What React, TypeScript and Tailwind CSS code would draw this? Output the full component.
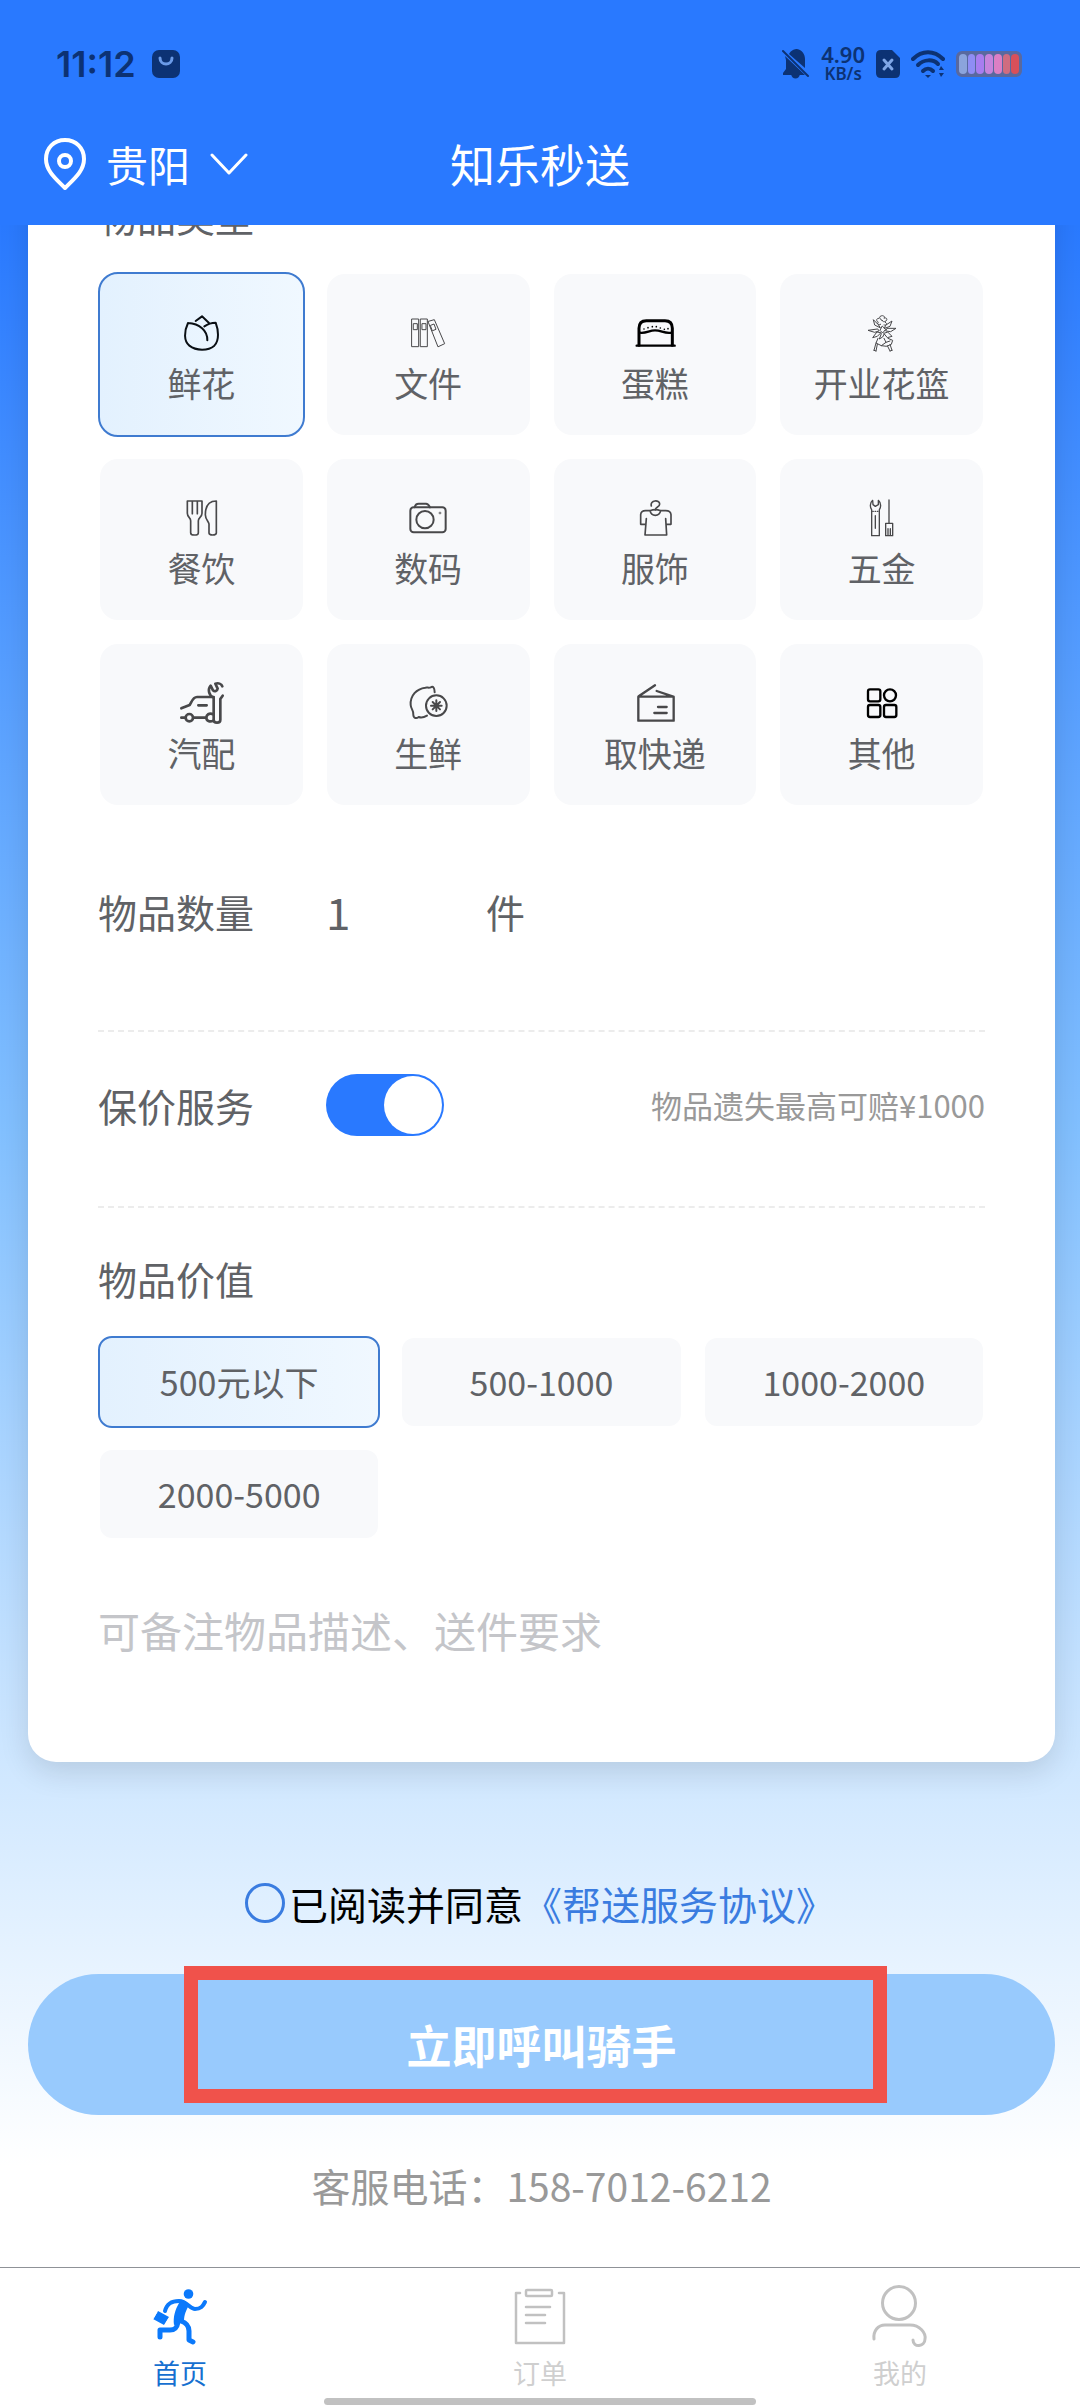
import React, { useState } from 'react';

type IconProps = { children: React.ReactNode; stroke?: string; width?: number };

const LineIcon: React.FC<IconProps> = ({ children, stroke = '#48484a', width = 5 }) => (
  <svg
    viewBox="0 0 120 120"
    className="w-10 h-10 overflow-visible"
    fill="none"
    stroke={stroke}
    strokeWidth={width}
    strokeLinecap="round"
    strokeLinejoin="round"
    aria-hidden="true"
  >
    {children}
  </svg>
);

const goods = [
  {
    name: '鲜花',
    icon: (
      <LineIcon stroke="#0a0f14" width={6}>
        <path d="M21 30C9 55 8 85 25 98C45 114 82 114 100 98C116 82 112 50 104 29C92 29 80 33 70 40M21 30C55 32 80 52 79 82M44 24L63 10L84 30" />
      </LineIcon>
    ),
  },
  {
    name: '文件',
    icon: (
      <LineIcon width={3}>
        <path d="M12 18H32V101H12ZM38 18H58V101H38ZM61 25L79 20L110 92L91 101ZM17 32H28V50H17ZM43 32H54V50H43ZM68 37L78 33L84 49L74 53Z" />
      </LineIcon>
    ),
  },
  {
    name: '蛋糕',
    icon: (
      <LineIcon stroke="#000" width={7}>
        <path d="M12 97V46Q12 23 34 23H90Q112 23 112 46V97" strokeWidth={9} />
        <path d="M5 98H119" />
        <path d="M14 59C34 62 42 52 60 52C80 52 88 63 110 59" />
        <path d="M27 48h0M39 44h0M52 41h0M64 41h0M76 45h0M88 49h0M99 47h0" strokeWidth={5} />
      </LineIcon>
    ),
  },
  {
    name: '开业花篮',
    icon: (
      <LineIcon width={3}>
        <path d="M60 22C52 18 50 11 57 9C63 6 70 10 66 16C72 12 78 18 72 24C66 28 62 26 60 22ZM50 16C42 16 42 24 49 28C44 30 48 38 56 34M70 28C78 32 74 38 66 36" />
        <path d="M48 34L34 20L38 36L54 44ZM72 36L90 24L84 40L68 46ZM46 48L18 52L38 58L50 54ZM76 46L102 46L86 56L72 54Z" />
        <path d="M60 40L54 52L62 60L70 50ZM44 58L32 74L46 70L56 60ZM66 62L76 74L90 70L78 58ZM58 62L52 78L62 72L66 64" />
        <path d="M48 76L42 90L58 98L72 88L66 76M42 90L36 112M46 94L42 114M36 112L42 114M78 76L92 82L88 94L74 100L58 98M84 94L90 112M76 98L84 114M84 114L90 112M72 88L84 84" />
      </LineIcon>
    ),
  },
  {
    name: '餐饮',
    icon: (
      <LineIcon>
        <path d="M19 9V46C19 58 29 58 29 68V104Q29 111 40 111Q52 111 52 104V68C52 58 63 58 63 46V9ZM34 9V47M49 9V47" />
        <path d="M106 9V105Q106 111 95 111Q84 111 84 105V78C84 72 73 64 73 50C73 22 84 9 106 9Z" />
      </LineIcon>
    ),
  },
  {
    name: '数码',
    icon: (
      <LineIcon width={6}>
        <rect x="7" y="28" width="106" height="75" rx="10" />
        <circle cx="51" cy="65" r="26" />
        <circle cx="96" cy="45" r="1" />
        <path d="M20 28C22 18 26 17 32 17H54C60 17 62 20 66 28" />
      </LineIcon>
    ),
  },
  {
    name: '服饰',
    icon: (
      <LineIcon>
        <path d="M49 24C44 6 74 4 74 18C74 28 61 26 61 36" />
        <path d="M34 62L30 111H95L92 62M32 79H17V50Q18 38 32 38H45Q48 52 61 52Q74 52 77 38H92Q107 38 108 50V79H94M45 38Q61 32 77 38" />
      </LineIcon>
    ),
  },
  {
    name: '五金',
    icon: (
      <LineIcon width={4}>
        <path d="M32 7C24 14 23 28 29 35V113H52V35C58 28 57 14 49 7V20L40 25L33 20ZM40 53V91M81 6V76M71 76H92V113H71ZM78 92V112M85 92V112" />
        <path d="M32 40H50" strokeDasharray="2 5" />
      </LineIcon>
    ),
  },
  {
    name: '汽配',
    icon: (
      <LineIcon width={8}>
        <path d="M1 76L26 66C32 56 36 42 48 42H98M52 67H77M1 104H12M38 104H75" />
        <circle cx="25" cy="104" r="11" />
        <path d="M97 94C84 88 76 96 76 104C76 113 86 118 97 113" />
        <path d="M98 44V110Q98 119 108 119Q118 119 118 110V48L125 38M98 44C82 36 80 18 89 8L96 22C101 27 109 24 110 17L103 2C114 -1 122 4 124 10" />
      </LineIcon>
    ),
  },
  {
    name: '生鲜',
    icon: (
      <LineIcon width={6}>
        <path d="M80 28C80 16 76 8 68 13C64 15 58 13 52 14C26 17 6 38 8 66C9 80 18 82 16 96C17 107 26 107 32 102C40 105 50 102 57 98" />
        <circle cx="85" cy="68" r="31" />
        <path d="M85 52V84M69 68H101M74 57L96 79M96 57L74 79" />
      </LineIcon>
    ),
  },
  {
    name: '取快递',
    icon: (
      <LineIcon width={7}>
        <path d="M10 41H116V113H10ZM11 40L60 7M65 24L115 41M69 72H95M58 90H95" />
      </LineIcon>
    ),
  },
  {
    name: '其他',
    icon: (
      <LineIcon stroke="#000" width={7}>
        <rect x="18" y="19" width="37" height="36" rx="6" />
        <circle cx="84" cy="37" r="18" />
        <rect x="18" y="66" width="37" height="36" rx="6" />
        <rect x="66" y="66" width="37" height="36" rx="6" />
      </LineIcon>
    ),
  },
];

const prices = ['500元以下', '500-1000', '1000-2000', '2000-5000'];

const batteryCells = [
  'bg-[#8ba4dc]',
  'bg-[#8f8df5]',
  'bg-[#a87df0]',
  'bg-[#c684dc]',
  'bg-[#dc7fc4]',
  'bg-[#d06c80]',
  'bg-[#d8505a]',
];

const optionOn = 'border-[#3f7bd0] bg-linear-to-r from-[#e3f1fe] to-[#f0f8ff]';
const optionOff = 'border-white bg-[#f8f9fb]';

const StatusBar = () => (
  <div className="flex h-32 items-center justify-between pl-14 pr-[58px] text-[#0c3274]">
    <div className="flex items-center gap-4">
      <span className="font-[Inter] text-[36px] font-semibold leading-10">11:12</span>
      <svg viewBox="0 0 28 28" className="w-7 h-7" aria-hidden="true">
        <rect width="28" height="28" rx="7" fill="currentColor" />
        <path d="M8 8C8 16 20 16 20 8" fill="none" stroke="#6b9be8" strokeWidth="3" strokeLinecap="round" />
      </svg>
    </div>
    <div className="flex items-center gap-[11px]">
      <svg viewBox="0 0 28 30" className="w-7 h-[30px]" fill="currentColor" aria-hidden="true">
        <path d="M7 5C9 1 13 0 15 0C20 1 23 5 23 10V19ZM3 7L23 26H1V24L4 20V11Z" />
        <path d="M9 25H18C17 31 10 31 9 25Z" />
        <path d="M1 2L26 27" stroke="currentColor" strokeWidth="2" strokeLinecap="round" />
      </svg>
      <div className="flex flex-col items-center font-['Noto_Sans'] font-semibold">
        <span className="text-[22px] leading-5">4.90</span>
        <span className="text-[17px] leading-5">KB/s</span>
      </div>
      <svg viewBox="0 0 24 28" className="w-6 h-7" aria-hidden="true">
        <path d="M5 0H16L24 8V23Q24 28 19 28H5Q0 28 0 23V5Q0 0 5 0Z" fill="currentColor" />
        <path d="M8 10L16 19M16 10L8 19" stroke="#7fa6e6" strokeWidth="3" strokeLinecap="round" />
      </svg>
      <svg viewBox="0 0 34 28" className="w-[34px] h-7" fill="none" stroke="currentColor" strokeLinecap="round" aria-hidden="true">
        <path d="M2 9C11 0 23 0 32 9" strokeWidth="4" />
        <path d="M7 15C13 9 22 9 27 14" strokeWidth="4" />
        <path d="M12 21C15 18 19 18 22 21" strokeWidth="4" />
        <path d="M14 25H20L17 28Z" fill="currentColor" stroke="none" />
        <path d="M28 20L30 16L33 20ZM28 23L30 27L33 23Z" fill="currentColor" stroke="none" />
      </svg>
      <div className="flex h-[26px] w-[66px] gap-px rounded-md border-3 border-[#59699f] bg-[#59699f]">
        {batteryCells.map((c) => (
          <span key={c} className={`flex-1 rounded-sm ${c}`} />
        ))}
      </div>
    </div>
  </div>
);

const Header = () => (
  <header className="sticky top-0 z-10 bg-[#2979ff] pb-[25px] text-white">
    <StatusBar />
    <div className="grid h-18 grid-cols-[1fr_auto_1fr] items-center">
      <button type="button" className="flex items-center gap-5 pl-11 text-[42px] leading-14">
        <svg viewBox="0 0 42 52" className="w-[42px] h-[52px]" fill="none" stroke="currentColor" strokeWidth="4" strokeLinejoin="round" aria-hidden="true">
          <path d="M21 2C10 2 2 10 2 21C2 33 12 41 21 50C30 41 40 33 40 21C40 10 32 2 21 2Z" />
          <circle cx="21" cy="23" r="6" />
        </svg>
        <span>贵阳</span>
        <svg viewBox="0 0 38 22" className="w-[38px] h-[22px]" fill="none" stroke="currentColor" strokeWidth="3" strokeLinecap="round" strokeLinejoin="round" aria-hidden="true">
          <path d="M2 2L19 20L36 2" />
        </svg>
      </button>
      <h1 className="text-[45px] leading-14">知乐秒送</h1>
    </div>
  </header>
);

const HomeIcon = () => (
  <svg viewBox="0 0 56 56" className="w-14 h-14 overflow-visible" fill="none" stroke="currentColor" strokeLinecap="round" strokeLinejoin="round" aria-hidden="true">
    <circle cx="36.5" cy="6" r="4.8" fill="currentColor" stroke="none" />
    <path d="M13 23C15 15 20 13 27 13C35 13 38 21 43 21C49 21 51 18 53 14" strokeWidth="4" />
    <path d="M27 12C34 12 37 16 36 19C33 25 32 28 32 34L22 37C21 29 23 22 27 15Z" fill="currentColor" stroke="none" />
    <path d="M29 33C35 35 37 38 37 43V52L41 54" strokeWidth="5" />
    <path d="M26 34C25 40 23 42 18 42H8V49" strokeWidth="5" />
    <path d="M6 23L17 29L12 37L1 31Z" fill="currentColor" stroke="none" />
    <path d="M5 24L1 31M17 30L13 37" stroke="#fff" strokeWidth="1" />
  </svg>
);

const OrderIcon = () => (
  <svg viewBox="0 0 56 56" className="w-14 h-14 overflow-visible" fill="none" stroke="#c1c1c1" strokeWidth="2.5" strokeLinecap="round" strokeLinejoin="round" aria-hidden="true">
    <path d="M8 5H4V55H52V5H47M14 19H38M14 27H33M14 35H33" />
    <rect x="14" y="2" width="26" height="6" rx="1" />
  </svg>
);

const MineIcon = () => (
  <svg viewBox="0 0 56 56" className="w-14 h-14 overflow-visible" fill="none" stroke="#c1c1c1" strokeWidth="3" strokeLinecap="round" aria-hidden="true">
    <circle cx="27" cy="15" r="16.5" />
    <path d="M2 51C1 43 6 37 13 37H38C48 37 54 45 53 51C53 59 41 60 41 52" />
  </svg>
);

const tabs = [
  { name: '首页', icon: <HomeIcon />, color: 'text-[#0b79fb]', label: 'text-[#1670d0]' },
  { name: '订单', icon: <OrderIcon />, color: '', label: 'text-[#cfcfcf]' },
  { name: '我的', icon: <MineIcon />, color: '', label: 'text-[#cfcfcf]' },
];

const App: React.FC = () => {
  const [type, setType] = useState('鲜花');
  const [price, setPrice] = useState('500元以下');
  const [count, setCount] = useState('1');
  const [insured, setInsured] = useState(true);
  const [agreed, setAgreed] = useState(false);

  return (
    <div className="flex min-h-screen flex-col bg-linear-to-b from-[#2979ff] from-9% via-[#82c0ff] via-47% to-white to-90% font-['Noto_Sans_CJK_SC',sans-serif] text-[#606266]">
      <Header />

      <main className="flex-1 pb-[52px] pl-7 pr-[25px]">
        <section className="-mt-[50px] rounded-[28px] bg-white px-[70px] pb-20 pt-3 shadow-[0_10px_30px_rgba(0,0,0,0.12)]">
          {/* 物品类型 */}
          <h2 className="mb-[29px] text-[39px] leading-14">物品类型</h2>
          <div className="grid grid-cols-4 gap-5">
            {goods.map((item) => (
              <button
                key={item.name}
                type="button"
                aria-pressed={type === item.name}
                onClick={() => setType(item.name)}
                className={`flex h-[165px] flex-col items-center gap-[5px] rounded-[20px] border-2 pt-[39px] ${
                  type === item.name ? optionOn : optionOff
                }`}
              >
                {item.icon}
                <span className="text-[34px] leading-[50px]">{item.name}</span>
              </button>
            ))}
          </div>

          {/* 数量 */}
          <div className="mt-[61px] flex items-center border-b-2 border-dashed border-[#ececec] pb-[76px] text-[39px]">
            <label htmlFor="count" className="w-[228px]">物品数量</label>
            <input
              id="count"
              value={count}
              onChange={(e) => setCount(e.target.value)}
              className="h-[86px] w-40 text-[44px] outline-none"
            />
            <span>件</span>
          </div>

          {/* 保价 */}
          <div className="flex items-center border-b-2 border-dashed border-[#ececec] pb-[70px] pt-[42px]">
            <label htmlFor="insured" className="w-[228px] text-[39px] leading-[62px]">保价服务</label>
            <input
              id="insured"
              type="checkbox"
              role="switch"
              checked={insured}
              onChange={(e) => setInsured(e.target.checked)}
              className="h-[62px] w-[118px] appearance-none rounded-full bg-gray-300 p-[2px] before:block before:size-[58px] before:rounded-full before:bg-white checked:bg-[#2979ff] checked:before:ml-auto"
            />
            <span className="ml-auto text-[31px] leading-[62px] text-[#999]">物品遗失最高可赔¥1000</span>
          </div>

          {/* 物品价值 */}
          <h2 className="mb-[30px] mt-[42px] text-[39px] leading-14">物品价值</h2>
          <div className="grid grid-cols-3 gap-5">
            {prices.map((p) => (
              <button
                key={p}
                type="button"
                aria-pressed={price === p}
                onClick={() => setPrice(p)}
                className={`h-[92px] rounded-[14px] border-2 text-[34px] leading-[50px] ${price === p ? optionOn : optionOff}`}
              >
                {p}
              </button>
            ))}
          </div>

          <textarea
            aria-label="备注"
            placeholder="可备注物品描述、送件要求"
            className="mt-[62px] block h-20 w-full resize-none text-[42px] leading-14 outline-none placeholder:text-[#c4c5c9]"
          />
        </section>

        <div className="mt-[111px] flex items-center justify-center pr-[3px] text-[39px] leading-[60px]">
          <input
            id="agree"
            type="checkbox"
            checked={agreed}
            onChange={(e) => setAgreed(e.target.checked)}
            className="mr-1 size-10 appearance-none rounded-full border-3 border-[#3a7ce0] checked:bg-[#3a7ce0]"
          />
          <label htmlFor="agree" className="text-black">已阅读并同意</label>
          <a href="#agreement" className="text-[#3a7ce0]">《帮送服务协议》</a>
        </div>

        <div className="relative mt-[41px]">
          <button type="button" className="h-[141px] w-full rounded-full bg-[#98cafd] text-[45px] font-bold text-white">
            立即呼叫骑手
          </button>
          <div className="pointer-events-none absolute -top-2 bottom-3 left-[156px] right-[168px] border-[14px] border-[#f0524b]" />
        </div>

        <p className="mt-10 text-center text-[39px] leading-[60px] text-[#999]">客服电话：158-7012-6212</p>
      </main>

      <nav className="sticky bottom-0 grid grid-cols-3 border-t border-[#8f9297] bg-white pb-[15px] pt-5">
        {tabs.map((tab) => (
          <a key={tab.name} href="#tab" className={`flex flex-col items-center gap-[9px] ${tab.color}`}>
            {tab.icon}
            <span className={`text-[27px] leading-10 ${tab.label}`}>{tab.name}</span>
          </a>
        ))}
        <div className="absolute bottom-[3px] left-[30%] right-[30%] h-[7px] rounded-full bg-[#c1c1c1]" />
      </nav>
    </div>
  );
};

export default App;
